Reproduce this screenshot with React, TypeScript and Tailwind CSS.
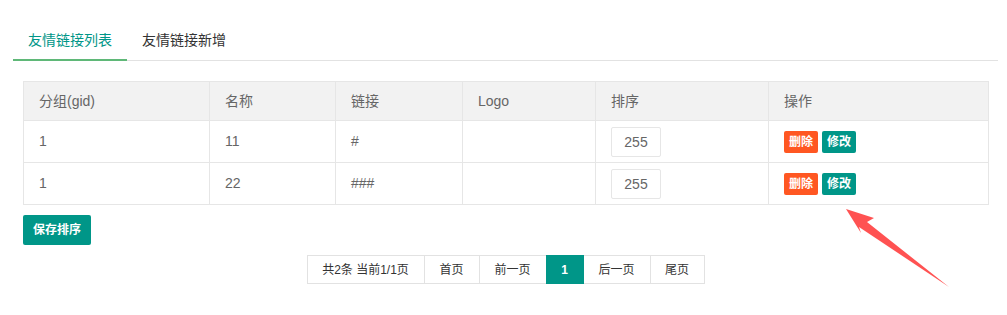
const rows = [
  { gid: "1", name: "11", link: "#", sort: "255" },
  { gid: "1", name: "22", link: "###", sort: "255" },
];

const pages = [
  { label: "共2条 当前1/1页", w: "w-[118px]" },
  { label: "首页", w: "w-[56px]" },
  { label: "前一页", w: "w-[68px]" },
  { label: "1", w: "w-[38px]", active: true },
  { label: "后一页", w: "w-[68px]" },
  { label: "尾页", w: "w-[55px]" },
];

export default function App() {
  return (
    <div className="relative w-[1007px] h-[315px] bg-white font-['Liberation_Sans','Noto_Sans_CJK_SC',sans-serif] text-[14px] text-[#666]">
      <div className="ml-[13px] w-[985px] pt-[20px]">
        {/* 选项卡 */}
        <div className="flex h-[41px] border-b border-[#e2e2e2]">
          <div className="px-[15px] h-[41px] leading-[40px] text-[#009688] border-b-2 border-[#5FB878]">
            友情链接列表
          </div>
          <div className="px-[15px] h-[40px] leading-[40px] text-[#333]">友情链接新增</div>
        </div>

        <div className="px-[10px] pt-[20px]">
          <table className="w-[966px] table-fixed border-collapse border border-[#e6e6e6]">
            <colgroup>
              <col className="w-[186px]" />
              <col className="w-[126px]" />
              <col className="w-[127px]" />
              <col className="w-[133px]" />
              <col className="w-[173px]" />
              <col />
            </colgroup>
            <thead>
              <tr className="bg-[#f2f2f2] h-[39px]">
                {["分组(gid)", "名称", "链接", "Logo", "排序", "操作"].map((h) => (
                  <th key={h} className="border border-[#e6e6e6] px-[15px] text-left font-normal">
                    {h}
                  </th>
                ))}
              </tr>
            </thead>
            <tbody>
              {rows.map((r, i) => (
                <tr key={i} className="h-[42px]">
                  <td className="border border-[#e6e6e6] px-[15px]">{r.gid}</td>
                  <td className="border border-[#e6e6e6] px-[15px]">{r.name}</td>
                  <td className="border border-[#e6e6e6] px-[15px]">{r.link}</td>
                  <td className="border border-[#e6e6e6] px-[15px]"></td>
                  <td className="border border-[#e6e6e6] px-[15px]">
                    <input
                      defaultValue={r.sort}
                      className="w-[50px] h-[30px] border border-[#e6e6e6] rounded-[2px] text-center text-[#666] outline-none"
                    />
                  </td>
                  <td className="border border-[#e6e6e6] px-[15px]">
                    <div className="flex gap-[4px]">
                      <button className="h-[22px] px-[5px] rounded-[2px] bg-[#FF5722] text-white text-[12px] font-bold leading-[22px]">
                        删除
                      </button>
                      <button className="h-[22px] px-[5px] rounded-[2px] bg-[#009688] text-white text-[12px] font-bold leading-[22px]">
                        修改
                      </button>
                    </div>
                  </td>
                </tr>
              ))}
            </tbody>
          </table>

          <button className="mt-[10px] h-[30px] px-[10px] rounded-[2px] bg-[#009688] text-white text-[12px] font-bold">
            保存排序
          </button>

          {/* 分页 */}
          <div className="mt-[10px] flex justify-center">
            <div className="flex">
              {pages.map((p, i) => (
                <div
                  key={p.label}
                  className={`${p.w} h-[29px] flex items-center justify-center text-[12px] ${
                    i > 0 ? "-ml-px" : ""
                  } ${
                    p.active
                      ? "bg-[#009688] text-white border border-[#009688] font-bold relative"
                      : "border border-[#e2e2e2] text-[#333] bg-white"
                  }`}
                >
                  {p.label}
                </div>
              ))}
            </div>
          </div>
        </div>
      </div>

      {/* 标注箭头 */}
      <svg className="absolute left-0 top-0 pointer-events-none" width="1007" height="315">
        <polygon
          points="846,209 874,218 867,222 949,287 859,227 861,233"
          fill="#ff5252"
        />
      </svg>
    </div>
  );
}
